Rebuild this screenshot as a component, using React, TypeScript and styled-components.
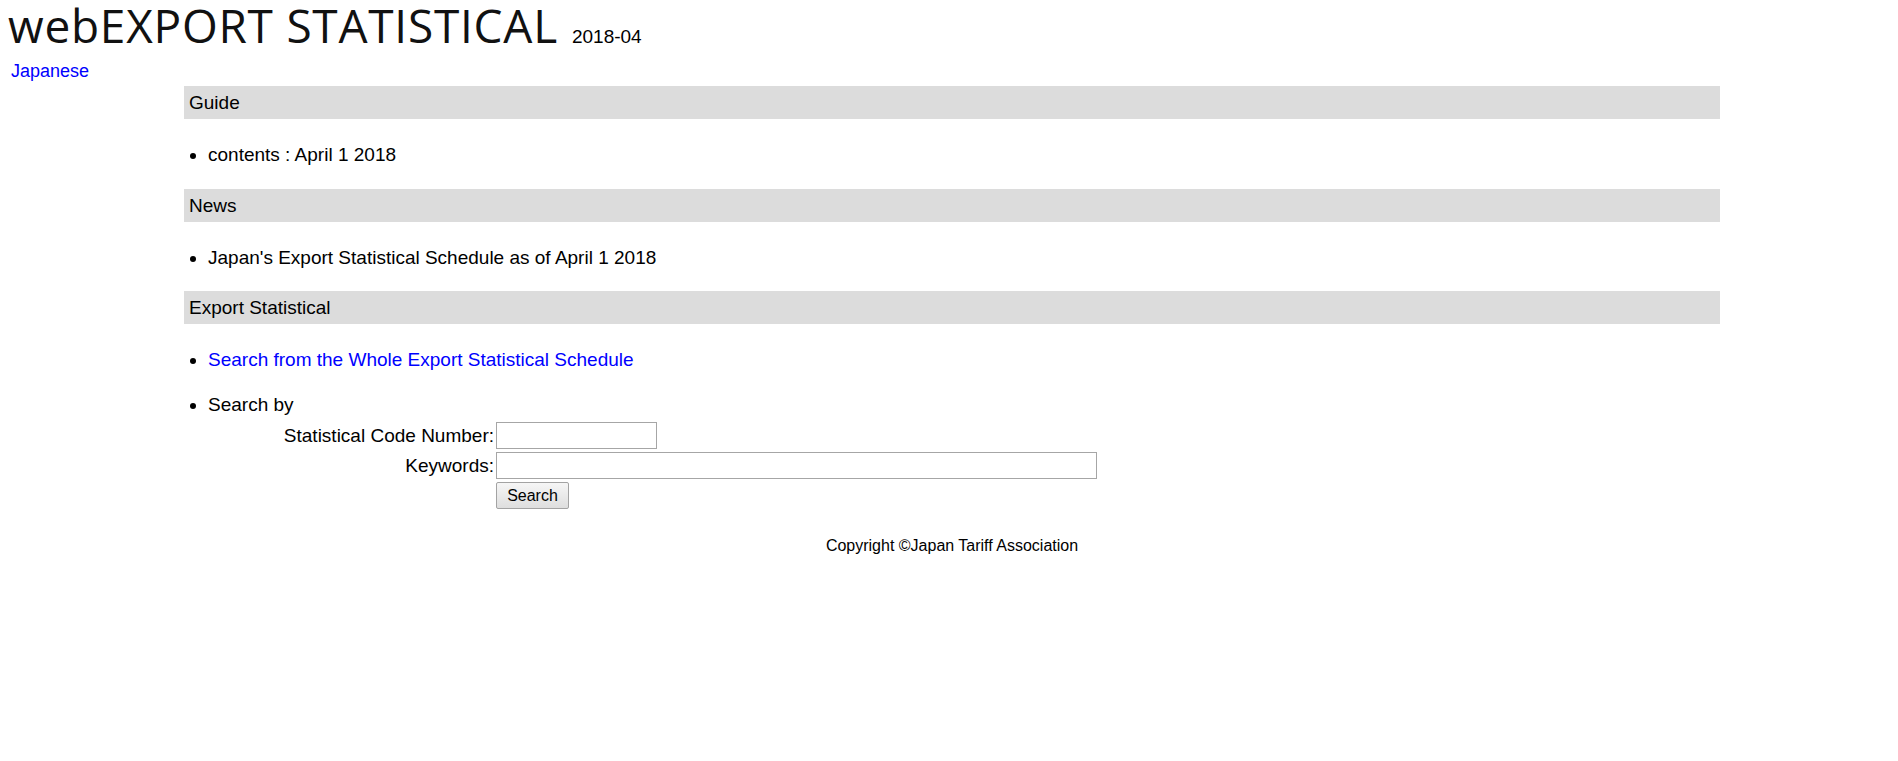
import styled, { createGlobalStyle } from 'styled-components'

const GlobalStyle = createGlobalStyle`
  html, body {
    margin: 0;
    padding: 0;
    background: #fff;
  }
  body {
    font-family: "Liberation Sans", Arial, sans-serif;
    font-size: 19px;
    line-height: 22px;
    color: #000;
  }
`;

const Header = styled.header`
  display: flex;
  flex-direction: column;
  align-items: flex-start;
`;

const Title = styled.h1`
  margin: 0;
  padding-left: 8px;
  font-family: "Open Sans", "DejaVu Sans", sans-serif;
  font-weight: 400;
  font-size: 46px;
  letter-spacing: 0.75px;
  line-height: 50px;
  color: #111;
  white-space: nowrap;
`;

const Edition = styled.span`
  margin-left: 14px;
  font-family: "Liberation Sans", Arial, sans-serif;
  font-size: 19px;
  letter-spacing: 0;
  line-height: 19px;
  color: #000;
`;

const Link = styled.a`
  color: #0000ff;
  text-decoration: none;
  cursor: pointer;
`;

const LangLink = styled(Link)`
  margin: 10px 0 0 11px;
  font-size: 18px;
`;

const Main = styled.main`
  margin: 4px 0 0 184px;
  width: 1536px;
  display: flex;
  flex-direction: column;
`;

const SectionBar = styled.h2`
  margin: 0;
  height: 33px;
  box-sizing: border-box;
  padding: 6px 0 5px 5px;
  background: #dcdcdc;
  font-size: 19px;
  font-weight: 400;
  line-height: 22px;
`;

const List = styled.ul`
  margin: 25px 0 0;
  padding-left: 24px;
  list-style: disc;
`;

const Item = styled.li`
  margin-bottom: 22.5px;
`;

const FormGrid = styled.div`
  display: grid;
  grid-template-columns: 286px auto;
  column-gap: 2px;
  row-gap: 3px;
  align-items: center;
  justify-items: start;
  margin-top: 6.5px;
`;

const Label = styled.label`
  justify-self: end;
  white-space: nowrap;
`;

const TextInput = styled.input<{ $w: number }>`
  width: ${(p) => p.$w}px;
  height: 27px;
  box-sizing: border-box;
  border: 1px solid #a6a6a6;
  background: #fff;
  padding: 2px 4px;
  font-size: 16px;
  font-family: "Liberation Sans", Arial, sans-serif;
  outline: none;
`;

const SearchButton = styled.button`
  grid-column: 2;
  width: 73px;
  height: 27px;
  box-sizing: border-box;
  border: 1px solid #a3a3a3;
  border-radius: 2px;
  background: linear-gradient(#f6f6f6, #dedede);
  font-family: "Liberation Sans", Arial, sans-serif;
  font-size: 16px;
  color: #000;
  padding: 0;
  cursor: pointer;
`;

const Footer = styled.footer`
  margin-top: 5px;
  text-align: center;
  font-size: 16px;
  line-height: 18px;
`;

const sections = [
  { title: 'Guide', items: ['contents : April 1 2018'] },
  { title: 'News', items: ["Japan's Export Statistical Schedule as of April 1 2018"] },
]

function App() {
  return (
    <>
      <GlobalStyle />
      <Header>
        <Title>
          webEXPORT STATISTICAL<Edition>2018-04</Edition>
        </Title>
        <LangLink href="#">Japanese</LangLink>
      </Header>
      <Main>
        {sections.map((s) => (
          <div key={s.title}>
            <SectionBar>{s.title}</SectionBar>
            <List>
              {s.items.map((it) => (
                <Item key={it}>{it}</Item>
              ))}
            </List>
          </div>
        ))}
        <div>
          <SectionBar>Export Statistical</SectionBar>
          <List>
            <Item>
              <Link href="#">Search from the Whole Export Statistical Schedule</Link>
            </Item>
            <Item>
              Search by
              <FormGrid>
                <Label htmlFor="code">Statistical Code Number:</Label>
                <TextInput id="code" type="text" $w={161} />
                <Label htmlFor="kw">Keywords:</Label>
                <TextInput id="kw" type="text" $w={601} />
                <SearchButton type="button">Search</SearchButton>
              </FormGrid>
            </Item>
          </List>
        </div>
        <Footer>Copyright ©Japan Tariff Association</Footer>
      </Main>
    </>
  )
}

export default App
